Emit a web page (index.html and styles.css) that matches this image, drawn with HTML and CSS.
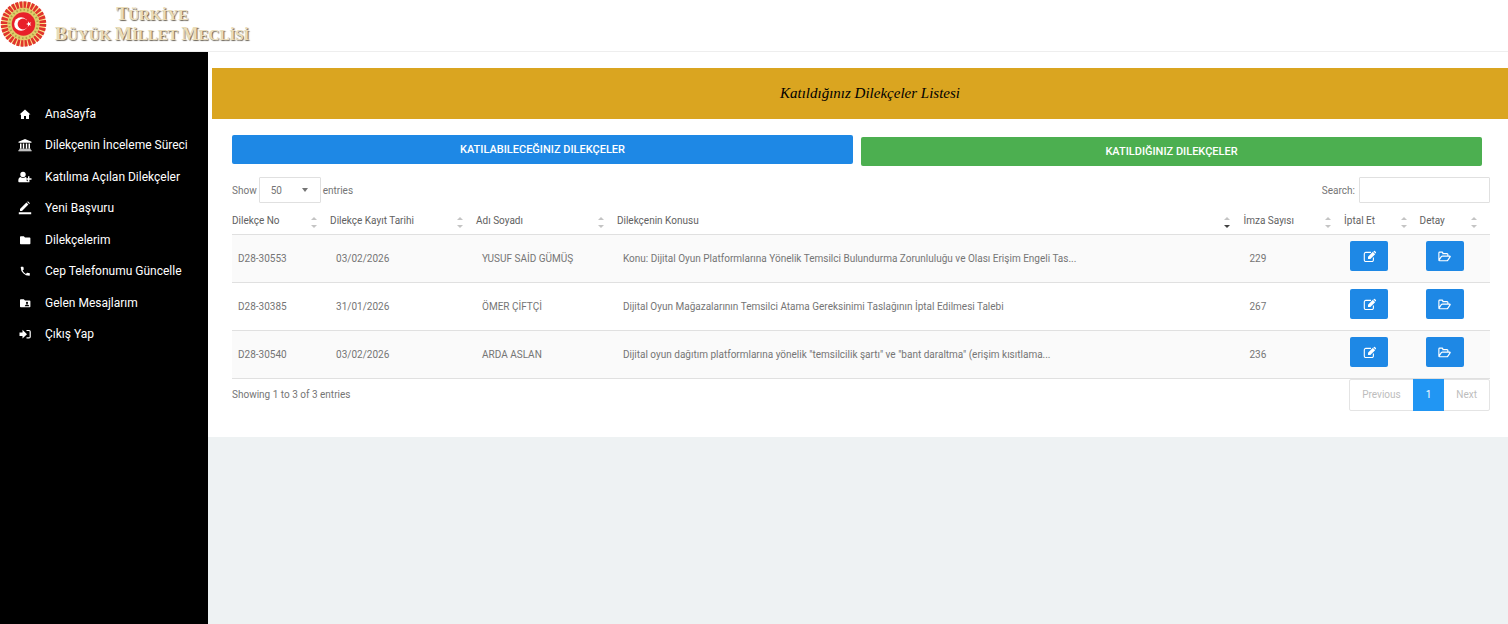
FILE: index.html
```html
<!DOCTYPE html>
<html lang="tr">
<head>
    <meta charset="UTF-8">
    <meta name="viewport" content="width=device-width, initial-scale=1.0">
    <title>Katıldığınız Dilekçeler</title>
    <link rel="stylesheet" href="styles.css">
</head>
<body>
    <!-- shared icons -->
    <svg class="sprite" aria-hidden="true">
        <symbol id="sort" viewBox="0 0 8 14">
            <path class="up" d="M1 4l3-3 3 3z"/>
            <path class="down" d="M1 9h6l-3 3z"/>
        </symbol>
        <symbol id="edit" viewBox="0 0 14 14">
            <path d="M11.2 8.2v2.6a1.6 1.6 0 0 1-1.6 1.6H3a1.6 1.6 0 0 1-1.6-1.6V4.2A1.6 1.6 0 0 1 3 2.6h5.6" fill="none" stroke="#fff" stroke-width="1.2"/>
            <path d="M5.4 9.8V7.2L10.600 2l2.500 2.500-5.200 5.300zM11.200 1.600l.5-.5a.8.8 0 0 1 1.100 0l1.100 1.100a.8.8 0 0 1 0 1.100l-.5.5z" fill="#fff"/>
        </symbol>
        <symbol id="folder-open" viewBox="0 0 15 14">
            <path d="M1 11.2V3a1 1 0 0 1 1-1h2.6a1 1 0 0 1 1 1v.7h4.8a1 1 0 0 1 1 1v1.7M1 11.4l2.8-4.2a1.6 1.6 0 0 1 1.3-.7h8.3c.7 0 .9.4.5 1l-2.5 3.7a1.6 1.6 0 0 1-1.3.7H2a1 1 0 0 1-1-1z" fill="none" stroke="#fff" stroke-width="1.3" stroke-linejoin="round"/>
        </symbol>
    </svg>

    <header class="topbar">
        <a class="brand" href="#">
            <svg class="emblem" viewBox="0 0 48 48" aria-hidden="true">
                <circle cx="24" cy="24" r="22.5" fill="#fbe08a"/>
                <circle cx="24" cy="24" r="19.5" fill="none" stroke="#e0352c" stroke-width="7.5" pathLength="160" stroke-dasharray="3.6 1.4"/>
                <circle cx="24" cy="24" r="14" fill="none" stroke="#e0cc6a" stroke-width="5"/>
                <circle cx="24" cy="24" r="14.5" fill="none" stroke="#a9a548" stroke-width="2" pathLength="120" stroke-dasharray="2 3"/>
                <circle cx="24" cy="24" r="12" fill="#e8202a"/>
                <circle cx="21.5" cy="24" r="7" fill="#fff"/>
                <circle cx="23.5" cy="24" r="5.5" fill="#e8202a"/>
                <path d="M26.6 24l2-.7v-2.1l1.3 1.7 2-.6-1.2 1.7 1.2 1.7-2-.6-1.3 1.7v-2.1z" fill="#fff"/>
            </svg>
            <span class="brand-name">
                <span><b>Türkiye</b></span>
                <span><b>Büyük</b> <b>Millet</b> <b>Meclisi</b></span>
            </span>
        </a>
    </header>

    <div class="wrapper">
        <nav class="sidebar">
            <ul>
                <li><a href="#">
                    <svg viewBox="0 0 14 14"><path d="M7 2.5l-5.500 5H3V12h3V9h2v3h3V7.500h1.500z"/></svg>
                    AnaSayfa</a></li>
                <li><a href="#">
                    <svg viewBox="0 0 14 14"><path d="M7 1L.5 3.800v1h13v-1zM2 5.500h1.500v5H2zM4.800 5.500h1.400v5H4.800zM7.800 5.500h1.400v5H7.800zM10.500 5.500H12v5h-1.500zM1.200 10.800h11.600v1H1.200zM.4 12.200h13.200v1H.4z"/></svg>
                    Dilekçenin İnceleme Süreci</a></li>
                <li><a href="#">
                    <svg viewBox="0 0 14 14"><circle cx="5" cy="4.500" r="2.700"/><path d="M2.600 7c1.500 1.200 3.300 1.200 4.800 0 .6.1 1 .3 1.300.7v2.500h2.600v2.100H1.500C.7 12.300.3 11.800.3 11c0-2 .7-3.900 2.300-4z"/><path d="M10.700 6.300v5M8 9h5.500" stroke="#000" stroke-width="2.600"/><path d="M10.700 6.200v5.600M7.900 9h5.600" stroke="#fff" stroke-width="1.400"/></svg>
                    Katılıma Açılan Dilekçeler</a></li>
                <li><a href="#">
                    <svg viewBox="0 0 14 14"><path d="M2 10V8l6.400-6.400 2 2L4 10zM9.200 1l.7-.7 2 2-.7.7zM.8 11.200h12.400v2H.8z"/></svg>
                    Yeni Başvuru</a></li>
                <li><a href="#">
                    <svg viewBox="0 0 14 14"><path d="M2.800 3.300h3l1.200 1.200h4.600a.8.8 0 0 1 .8.800v5.100a.8.8 0 0 1-.8.800H2.800a.8.8 0 0 1-.8-.8V4.100a.8.8 0 0 1 .8-.8z"/></svg>
                    Dilekçelerim</a></li>
                <li><a href="#">
                    <svg viewBox="0 0 14 14"><path d="M4.600 6.600a7.500 7.500 0 0 0 3.300 3.300l1.100-1.100a.5.5 0 0 1 .5-.1c.6.200 1.200.3 1.800.3.300 0 .5.200.5.500v1.800c0 .3-.2.500-.5.500A8.600 8.600 0 0 1 2.700 3.200c0-.3.200-.5.500-.5H5c.3 0 .5.200.5.500 0 .6.100 1.200.3 1.800.1.200 0 .4-.1.500z"/></svg>
                    Cep Telefonumu Güncelle</a></li>
                <li><a href="#">
                    <svg viewBox="0 0 14 14"><path d="M2.800 3.300h3l1.200 1.200h4.600a.8.8 0 0 1 .8.800v5.100a.8.8 0 0 1-.8.800H2.800a.8.8 0 0 1-.8-.8V4.100a.8.8 0 0 1 .8-.8z"/><circle cx="9" cy="6.900" r="1.100" fill="#000"/><path d="M6.800 10.200c0-1.100 1.200-1.600 2.200-1.600s2.200.5 2.200 1.600z" fill="#000"/></svg>
                    Gelen Mesajlarım</a></li>
                <li><a href="#">
                    <svg viewBox="0 0 14 14"><path d="M1.500 5.500h3V2.800L9 7.200l-4.500 4.400V8.900h-3z"/><path d="M8.500 3.500H11a1.200 1.200 0 0 1 1.200 1.200v5A1.200 1.200 0 0 1 11 10.900H8.500" fill="none" stroke="#fff" stroke-width="1.200"/></svg>
                    Çıkış Yap</a></li>
            </ul>
        </nav>

        <main class="content">
            <h1 class="page-title">Katıldığınız Dilekçeler Listesi</h1>

            <div class="panel">
                <div class="tabs">
                    <button type="button" class="tab tab-blue">KATILABILECEĞINIZ DILEKÇELER</button>
                    <button type="button" class="tab tab-green">KATILDIĞINIZ DILEKÇELER</button>
                </div>

                <div class="table-tools">
                    <div class="tool">
                        <label for="length">Show</label>
                        <span class="select-box">
                            <select id="length">
                                <option>10</option>
                                <option>25</option>
                                <option selected>50</option>
                                <option>100</option>
                            </select>
                        </span>
                        <span>entries</span>
                    </div>
                    <div class="tool search">
                        <label for="search">Search:</label>
                        <input type="search" id="search">
                    </div>
                </div>

                <table class="petitions">
                    <thead>
                        <tr>
                            <th class="col-no"><div>Dilekçe No<svg><use href="#sort"/></svg></div></th>
                            <th class="col-date"><div>Dilekçe Kayıt Tarihi<svg><use href="#sort"/></svg></div></th>
                            <th class="col-name"><div>Adı Soyadı<svg><use href="#sort"/></svg></div></th>
                            <th class="sorted"><div>Dilekçenin Konusu<svg><use href="#sort"/></svg></div></th>
                            <th class="col-count"><div>İmza Sayısı<svg><use href="#sort"/></svg></div></th>
                            <th class="col-cancel"><div>İptal Et<svg><use href="#sort"/></svg></div></th>
                            <th class="col-detail"><div>Detay<svg><use href="#sort"/></svg></div></th>
                        </tr>
                    </thead>
                    <tbody>
                        <tr>
                            <td>D28-30553</td>
                            <td>03/02/2026</td>
                            <td>YUSUF SAİD GÜMÜŞ</td>
                            <td>Konu: Dijital Oyun Platformlarına Yönelik Temsilci Bulundurma Zorunluluğu ve Olası Erişim Engeli Tas...</td>
                            <td>229</td>
                            <td class="action"><button type="button" aria-label="İptal Et"><svg><use href="#edit"/></svg></button></td>
                            <td class="action"><button type="button" aria-label="Detay"><svg><use href="#folder-open"/></svg></button></td>
                        </tr>
                        <tr>
                            <td>D28-30385</td>
                            <td>31/01/2026</td>
                            <td>ÖMER ÇİFTÇİ</td>
                            <td>Dijital Oyun Mağazalarının Temsilci Atama Gereksinimi Taslağının İptal Edilmesi Talebi</td>
                            <td>267</td>
                            <td class="action"><button type="button" aria-label="İptal Et"><svg><use href="#edit"/></svg></button></td>
                            <td class="action"><button type="button" aria-label="Detay"><svg><use href="#folder-open"/></svg></button></td>
                        </tr>
                        <tr>
                            <td>D28-30540</td>
                            <td>03/02/2026</td>
                            <td>ARDA ASLAN</td>
                            <td>Dijital oyun dağıtım platformlarına yönelik "temsilcilik şartı" ve "bant daraltma" (erişim kısıtlama...</td>
                            <td>236</td>
                            <td class="action"><button type="button" aria-label="İptal Et"><svg><use href="#edit"/></svg></button></td>
                            <td class="action"><button type="button" aria-label="Detay"><svg><use href="#folder-open"/></svg></button></td>
                        </tr>
                    </tbody>
                </table>

                <div class="table-footer">
                    <p>Showing 1 to 3 of 3 entries</p>
                    <div class="pagination">
                        <a href="#">Previous</a>
                        <a href="#" class="active">1</a>
                        <a href="#">Next</a>
                    </div>
                </div>
            </div>
        </main>
    </div>
</body>
</html>
```

FILE: styles.css
```css
*{
    margin: 0;
    padding: 0;
    box-sizing: border-box;
}

body {
    min-height: 100vh;
    display: flex;
    flex-direction: column;
    background-color: #eef2f3;
    color: #757575;
    font-family: Roboto, "Liberation Sans", sans-serif;
    font-size: 10px;
}

button, input, select {
    font: inherit;
    color: inherit;
}

a {
    color: inherit;
    text-decoration: none;
}

.sprite {
    display: none;
}

/* top bar */
.topbar {
    height: 52px;
    background-color: white;
    border-bottom: 1px solid #eeeeee;
}

.brand {
    display: inline-flex;
    align-items: flex-start;
    gap: 8px;
}

.emblem {
    width: 47px;
    height: 48px;
}

.brand-name {
    display: flex;
    flex-direction: column;
    align-items: center;
    padding-top: 5px;
    font-family: "Liberation Serif", serif;
    font-size: 15px;
    line-height: 19px;
    text-transform: uppercase;
    color: #eadcb8;
    text-shadow: 1px 1px 1px #6b6458;
}

.brand-name b {
    display: inline-block;
}

.brand-name b::first-letter {
    font-size: 18px;
}

/* side menu */
.wrapper {
    flex: 1;
    display: flex;
}

.sidebar {
    width: 208px;
    flex-shrink: 0;
    padding-top: 46px;
    background-color: black;
    color: white;
    font-size: 12px;
}

.sidebar ul {
    display: flex;
    flex-direction: column;
    height: 252px;
    list-style: none;
}

.sidebar li {
    flex: 1;
    display: flex;
}

.sidebar a {
    display: flex;
    align-items: center;
    gap: 13px;
    padding-left: 18px;
}

.sidebar svg {
    width: 14px;
    height: 14px;
    fill: white;
}

/* page */
.content {
    flex: 1;
    align-self: flex-start;
    padding: 16px 0 26px 4px;
    background-color: white;
}

.page-title {
    padding-left: 20px;
    background-color: goldenrod;
    color: black;
    font-family: "Liberation Serif", serif;
    font-size: 15px;
    font-style: italic;
    font-weight: normal;
    line-height: 51px;
    text-align: center;
}

.panel {
    padding: 16px 18px 0 20px;
}

.tabs {
    display: flex;
    gap: 8px;
    padding-right: 8px;
}

.tab {
    flex: 1;
    height: 29px;
    border: none;
    border-radius: 2px;
    color: white;
    font-size: 11px;
    font-weight: 500;
    cursor: pointer;
}

.tab-blue {
    background-color: #1e88e5;
}

.tab-green {
    margin-top: 2px;
    background-color: #4caf50;
}

.table-tools {
    display: flex;
    justify-content: space-between;
    margin-top: 11px;
}

.tool {
    display: flex;
    align-items: center;
    gap: 2px;
}

.search {
    gap: 4px;
}

.select-box {
    position: relative;
}

.select-box::after {
    content: "";
    position: absolute;
    right: 13px;
    top: 11px;
    border: 3px solid transparent;
    border-top: 4px solid #757575;
    border-bottom: none;
    pointer-events: none;
}

.tool select, .tool input {
    height: 26px;
    border: 1px solid #e0e0e0;
    border-radius: 1px;
    background-color: white;
    appearance: none;
    display: block;
}

.tool select {
    width: 62px;
    padding-left: 11px;
}

.tool input {
    width: 131px;
    padding: 0 8px;
}

/* table */
.petitions {
    width: 100%;
    table-layout: fixed;
    border-collapse: collapse;
}

.col-no { width: 7.8%; }
.col-date { width: 11.6%; }
.col-name { width: 11.2%; }
.col-count { width: 8%; }
.col-cancel { width: 6%; }
.col-detail { width: 5.6%; }

.petitions th {
    height: 31px;
    padding: 5px 12px 0 0;
    color: #616161;
    font-weight: normal;
    text-align: left;
}

.petitions th div {
    display: flex;
    justify-content: space-between;
    align-items: flex-end;
    line-height: 18px;
}

.petitions th svg {
    width: 8px;
    height: 14px;
    color: #c4c4c4;
    fill: #c4c4c4;
}

.down {
    fill: currentColor;
}

.petitions .sorted svg {
    color: #424242;
}

.petitions td {
    height: 48px;
    padding: 0 6px;
    border-top: 1px solid #e0e0e0;
    border-bottom: 1px solid #e0e0e0;
}

.petitions tbody tr:nth-child(odd) {
    background-color: #fafafa;
}

.petitions .action {
    padding-bottom: 4px;
}

.action button {
    display: flex;
    align-items: center;
    justify-content: center;
    width: 38px;
    height: 30px;
    border: none;
    border-radius: 2px;
    background-color: #1e88e5;
    cursor: pointer;
}

.action svg {
    width: 13px;
    height: 13px;
}

.table-footer {
    display: flex;
    justify-content: space-between;
}

.table-footer p {
    line-height: 32px;
}

.pagination {
    display: flex;
    border: 1px solid #e4e4e4;
    border-radius: 2px;
    color: #bdbdbd;
    line-height: 30px;
}

.pagination a {
    padding: 0 12px;
}

.pagination .active {
    margin: -1px 0;
    padding: 1px 13px;
    background-color: #2196f3;
    color: white;
}
```
